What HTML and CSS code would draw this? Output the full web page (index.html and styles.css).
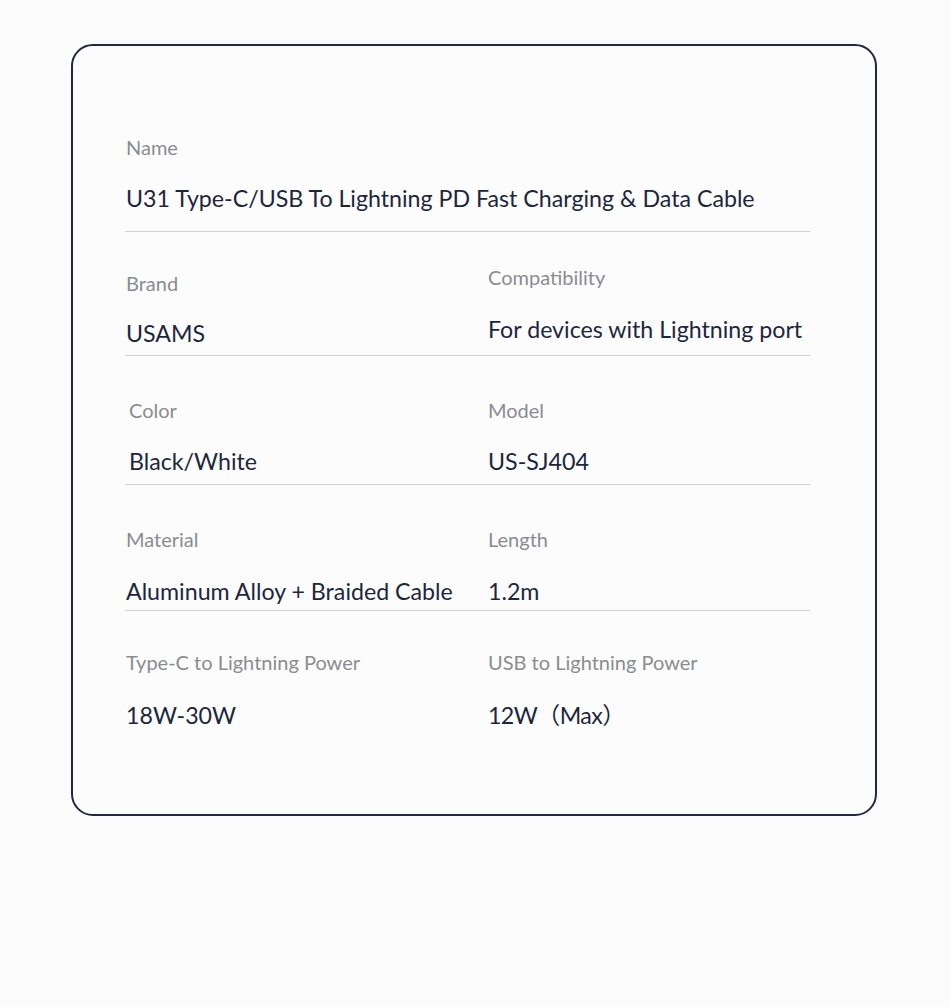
FILE: index.html
```html
<!DOCTYPE html>
<html lang="en">
<head>
<meta charset="utf-8">
<title>U31 Specs</title>
<link rel="stylesheet" href="styles.css">
</head>
<body>
<section class="card">
  <div class="row row--single row--first">
    <div class="cell">
      <div class="label">Name</div>
      <div class="value">U31 Type-C/USB To Lightning PD Fast Charging &amp; Data Cable</div>
    </div>
  </div>
  <div class="row row--second">
    <div class="cell">
      <div class="label">Brand</div>
      <div class="value">USAMS</div>
    </div>
    <div class="cell cell--raised">
      <div class="label">Compatibility</div>
      <div class="value">For devices with Lightning port</div>
    </div>
  </div>
  <div class="row row--third">
    <div class="cell cell--indent">
      <div class="label">Color</div>
      <div class="value">Black/White</div>
    </div>
    <div class="cell">
      <div class="label">Model</div>
      <div class="value">US-SJ404</div>
    </div>
  </div>
  <div class="row row--tight">
    <div class="cell">
      <div class="label">Material</div>
      <div class="value">Aluminum Alloy + Braided Cable</div>
    </div>
    <div class="cell">
      <div class="label">Length</div>
      <div class="value">1.2m</div>
    </div>
  </div>
  <div class="row row--last">
    <div class="cell">
      <div class="label">Type-C to Lightning Power</div>
      <div class="value">18W-30W</div>
    </div>
    <div class="cell">
      <div class="label">USB to Lightning Power</div>
      <div class="value value--paren">12W（Max）</div>
    </div>
  </div>
</section>
</body>
</html>
```
FILE: styles.css
```css
* { box-sizing: border-box; }
html, body { margin: 0; padding: 0; }
body {
  background: #fbfbfc;
  width: 950px;
  height: 1007px;
  font-family: Lato, "Noto Sans", "Noto Sans CJK SC", sans-serif;
  overflow: hidden;
}
.card {
  margin: 44px 0 0 71px;
  width: 806px;
  height: 772px;
  border: 2px solid #1f2944;
  border-radius: 22px;
  background: #fcfcfc;
  padding: 0 65px 0 52px;
}
.row {
  display: grid;
  grid-template-columns: 362px 1fr;
  align-items: start;
  border-bottom: 1px solid #cfcfd2;
}
.row--single { grid-template-columns: 1fr; }
.cell {
  padding: 40px 0 7px 1px;
  display: flex;
  flex-direction: column;
  gap: 24px;
}
.row--first .cell { padding-top: 89px; padding-bottom: 18px; }
.row--second .cell { padding-top: 39px; padding-bottom: 7px; gap: 23px; }
.row--second .cell--raised { padding-top: 33px; padding-bottom: 11px; gap: 25px; }
.row--third .cell { padding-top: 42px; padding-bottom: 8px; gap: 24px; }
.row--third .cell--indent { padding-left: 4px; }
.row--tight .cell { padding-top: 42px; padding-bottom: 4px; gap: 25px; }
.row--last { border-bottom: none; }
.row--last .cell { padding-top: 39px; gap: 26px; }
.label {
  font-size: 20px;
  line-height: 24px;
  color: #8b8c90;
  white-space: nowrap;
}
.value {
  font-size: 23.2px;
  line-height: 30px;
  color: #1c2640;
  white-space: nowrap;
}
.value--paren { letter-spacing: -0.6px; }
```
